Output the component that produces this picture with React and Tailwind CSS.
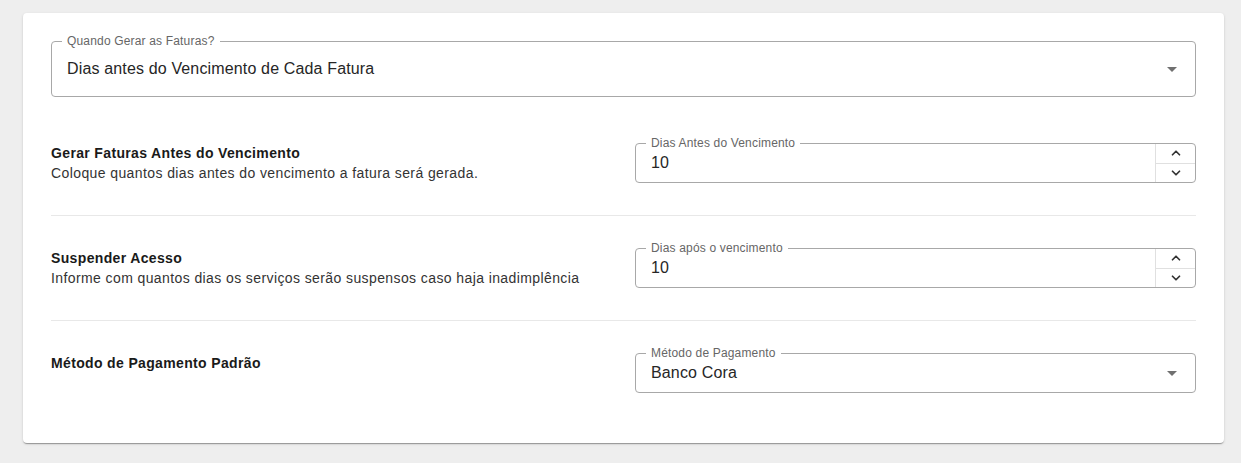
import { ChevronUp, ChevronDown } from 'lucide-react';

const FONT = { fontFamily: '"Liberation Sans", Arial, sans-serif' };

function ArrowDrop() {
  return (
    <svg viewBox="0 0 24 24" className="w-6 h-6 fill-[#707070]">
      <path d="M7 10l5 5 5-5z" />
    </svg>
  );
}

function Label({ children }) {
  return (
    <span className="absolute -top-[8px] left-[10px] px-[5px] bg-white text-[12px] leading-[14px] tracking-[0.17px] text-[#666]">
      {children}
    </span>
  );
}

function SelectField({ label, value, tall }) {
  return (
    <div className={`relative flex items-center border border-[#a8a8a8] rounded-[4px] pl-[15px] pr-[11px] ${tall ? 'h-[56px]' : 'h-[40px]'}`}>
      <Label>{label}</Label>
      <span className="flex-1 text-[16px] tracking-[0.15px] text-[#262626]">{value}</span>
      <ArrowDrop />
    </div>
  );
}

function NumberField({ label, value }) {
  return (
    <div className="relative flex h-[40px] border border-[#a8a8a8] rounded-[4px]">
      <Label>{label}</Label>
      <span className="flex-1 flex items-center pl-[15px] text-[16px] tracking-[0.15px] text-[#262626]">{value}</span>
      <div className="w-[40px] flex flex-col border-l border-[#e0e0e0]">
        <div className="flex-1 flex items-center justify-center border-b border-[#e0e0e0]">
          <ChevronUp size={14} strokeWidth={3} className="text-[#333]" />
        </div>
        <div className="flex-1 flex items-center justify-center">
          <ChevronDown size={14} strokeWidth={3} className="text-[#333]" />
        </div>
      </div>
    </div>
  );
}

function Section({ title, text, children, last }) {
  return (
    <div className={`grid grid-cols-[560px_1fr] gap-[24px] ${last ? 'pt-[32px]' : 'py-[32px] border-b border-[#e8e8e8]'}`}>
      <div className="text-[14px] leading-[20px]">
        <p className="font-bold text-[#1a1a1a] tracking-[0.35px]">{title}</p>
        {text && <p className="text-[#333] tracking-[0.4px]">{text}</p>}
      </div>
      {children}
    </div>
  );
}

export default function App() {
  return (
    <div className="min-h-[463px] bg-[#eeeeee] pt-[13px] pl-[23px] pr-[17px] pb-[20px]" style={FONT}>
      <div className="bg-white rounded-[4px] shadow-[0_2px_1px_-1px_rgba(0,0,0,0.2),0_1px_1px_0_rgba(0,0,0,0.14),0_1px_3px_0_rgba(0,0,0,0.12)] px-[28px] pt-[28px] pb-[50px]">
        <SelectField tall label="Quando Gerar as Faturas?" value="Dias antes do Vencimento de Cada Fatura" />
        <div className="mt-[14px]">
          <Section
            title="Gerar Faturas Antes do Vencimento"
            text="Coloque quantos dias antes do vencimento a fatura será gerada."
          >
            <NumberField label="Dias Antes do Vencimento" value="10" />
          </Section>
          <Section
            title="Suspender Acesso"
            text="Informe com quantos dias os serviços serão suspensos caso haja inadimplência"
          >
            <NumberField label="Dias após o vencimento" value="10" />
          </Section>
          <Section title="Método de Pagamento Padrão" last>
            <SelectField label="Método de Pagamento" value="Banco Cora" />
          </Section>
        </div>
      </div>
    </div>
  );
}
